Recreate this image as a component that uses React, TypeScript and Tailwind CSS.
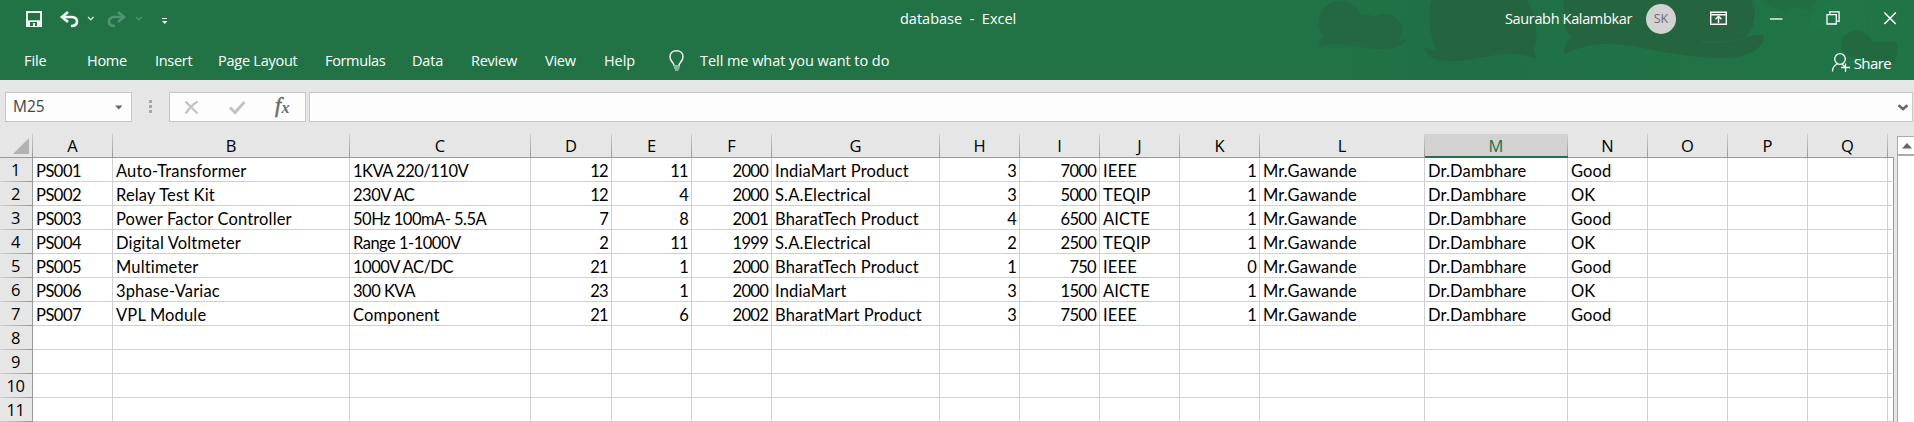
type Column = { id: string; width: string; numeric?: boolean; selected?: boolean };

const columns: Column[] = [
  { id: 'A', width: 'w-[80px]' },
  { id: 'B', width: 'w-[237px]' },
  { id: 'C', width: 'w-[181px]' },
  { id: 'D', width: 'w-[81px]', numeric: true },
  { id: 'E', width: 'w-[80px]', numeric: true },
  { id: 'F', width: 'w-[80px]', numeric: true },
  { id: 'G', width: 'w-[168px]' },
  { id: 'H', width: 'w-[80px]', numeric: true },
  { id: 'I', width: 'w-[80px]', numeric: true },
  { id: 'J', width: 'w-[80px]' },
  { id: 'K', width: 'w-[80px]', numeric: true },
  { id: 'L', width: 'w-[165px]' },
  { id: 'M', width: 'w-[143px]', selected: true },
  { id: 'N', width: 'w-[80px]' },
  { id: 'O', width: 'w-[80px]' },
  { id: 'P', width: 'w-[80px]' },
  { id: 'Q', width: 'w-[80px]' },
];

const rows: string[][] = [
  ['PS001', 'Auto-Transformer', '1KVA 220/110V', '12', '11', '2000', 'IndiaMart Product', '3', '7000', 'IEEE', '1', 'Mr.Gawande', 'Dr.Dambhare', 'Good'],
  ['PS002', 'Relay Test Kit', '230V AC', '12', '4', '2000', 'S.A.Electrical', '3', '5000', 'TEQIP', '1', 'Mr.Gawande', 'Dr.Dambhare', 'OK'],
  ['PS003', 'Power Factor Controller', '50Hz 100mA- 5.5A', '7', '8', '2001', 'BharatTech Product', '4', '6500', 'AICTE', '1', 'Mr.Gawande', 'Dr.Dambhare', 'Good'],
  ['PS004', 'Digital Voltmeter', 'Range 1-1000V', '2', '11', '1999', 'S.A.Electrical', '2', '2500', 'TEQIP', '1', 'Mr.Gawande', 'Dr.Dambhare', 'OK'],
  ['PS005', 'Multimeter', '1000V AC/DC', '21', '1', '2000', 'BharatTech Product', '1', '750', 'IEEE', '0', 'Mr.Gawande', 'Dr.Dambhare', 'Good'],
  ['PS006', '3phase-Variac', '300 KVA', '23', '1', '2000', 'IndiaMart', '3', '1500', 'AICTE', '1', 'Mr.Gawande', 'Dr.Dambhare', 'OK'],
  ['PS007', 'VPL Module', 'Component', '21', '6', '2002', 'BharatMart Product', '3', '7500', 'IEEE', '1', 'Mr.Gawande', 'Dr.Dambhare', 'Good'],
  [], [], [], [],
];

const tabs = [
  { label: 'File', style: 'w-[63px] tracking-[-0.1px]' },
  { label: 'Home', style: 'w-[68px] tracking-[-0.3px]' },
  { label: 'Insert', style: 'w-[63px] tracking-[-0.3px]' },
  { label: 'Page Layout', style: 'w-[107px] tracking-[-0.25px]' },
  { label: 'Formulas', style: 'w-[87px] tracking-[-0.35px]' },
  { label: 'Data', style: 'w-[59px] tracking-[-0.15px]' },
  { label: 'Review', style: 'w-[74px] tracking-[-0.25px]' },
  { label: 'View', style: 'w-[59px] tracking-[-0.25px]' },
  { label: 'Help', style: 'w-[64px] tracking-[-0.1px]' },
];

// Codes with several digits are set tighter than plain words.
function cellTracking(value: string | undefined, numeric?: boolean) {
  if (numeric) return 'text-right tracking-[-0.7px]';
  if (value && /\d{2}/.test(value)) return 'text-left tracking-[-0.5px]';
  return 'text-left tracking-[0.15px]';
}

function Backdrop() {
  return (
    <svg className="absolute right-0 top-0" width="640" height="80" viewBox="1274 0 640 80">
      <defs>
        <linearGradient id="shade" x1="0" x2="1">
          <stop offset="0" stopColor="#217346" stopOpacity="0" />
          <stop offset="0.25" stopColor="#1f7145" />
          <stop offset="1" stopColor="#217446" />
        </linearGradient>
      </defs>
      <rect x="1274" width="640" height="80" fill="url(#shade)" />
      <path d="M1808 32c0-18 12-32 29-32h22c7 8 9 18 7 31c-6-2-15-2-20 3c-14-4-24-5-38-2Z" fill="#227848" opacity=".65" />
      <path d="M1762 0h54l-8 11c-9-5-17-4-25 0c-8-3-14-4-21-11Z" fill="#236b42" opacity=".6" />
      <g fill="#24653f">
        <path d="M1319 47c0-5 2-8 6-10c-4-3-6-8-6-14c0-13 9-22 21-22c10 0 18 6 21 15c3-2 9-2 13 1c8-5 17-3 23 2c7 6 7 14 2 22l7-2c0 6-12 10-25 10c-27-1-42-9-62-2Z" opacity=".8" />
        <path d="M1432 0C1427 14 1429 33 1436 50C1432 50 1427 48 1424 48C1426 57 1436 61 1448 61C1473 62 1490 53 1514 54C1524 55 1530 56 1537 59L1534 50C1539 36 1536 15 1527 0Z" />
        <path d="M1563 0C1565 12 1562 28 1571 37C1566 42 1564 48 1564 54C1580 48 1592 43 1614 44C1642 46 1665 55 1712 58C1744 60 1762 50 1764 38C1764 33 1757 35 1746 37C1757 24 1756 10 1752 0Z" />
        <path d="M1841 44c0-8 7-13 15-13c8 0 14 4 16 11h24c3 6 1 18-3 22c-16-3-34-4-46-9c-4-3-6-6-6-11Z" opacity=".75" />
      </g>
      <path d="M1701 41c12 3 30 1 44-3" stroke="#217144" strokeWidth="1.5" fill="none" opacity=".7" />
    </svg>
  );
}

function TitleBar() {
  return (
    <div className="relative flex h-[38px] items-center pl-[26px]">
      <svg width="150" height="38" viewBox="26 0 150 38" fill="none">
        <path d="M27 12h14v14H27z" stroke="#f3f3f3" strokeWidth="2" />
        <path d="M27 20.3h14V26H27z" fill="#f3f3f3" />
        <path d="M30 22h7v4h-2v-3h-2v3h-3z" fill="#217346" />
        <path d="M63 17h8c4.500 0 6 2 6 4.500s-2 4.500-6 4.500" stroke="#f3f3f3" strokeWidth="2.700" />
        <path d="M68 12l-6 5l6 5" stroke="#f3f3f3" strokeWidth="2.700" />
        <path d="M88 17l2.800 2.800L93.600 17" stroke="#dbe8e0" strokeWidth="1.300" />
        <path d="M123 17h-8c-4.500 0-6 2-6 4.500s2 4.500 6 4.500" stroke="#4f9370" strokeWidth="2.700" />
        <path d="M118 12l6 5l-6 5" stroke="#4f9370" strokeWidth="2.700" />
        <path d="M136 17l2.800 2.800l2.800-2.800" stroke="#4f9370" strokeWidth="1.300" />
        <path d="M162 18.500h5" stroke="#f3f3f3" strokeWidth="1" />
        <path d="M162 21h5.500l-2.750 3z" fill="#f3f3f3" />
      </svg>
      <span className="ml-[724px] whitespace-pre tracking-[0px]">database  -  Excel</span>
      <div className="ml-auto flex items-center pr-[16px]">
        <span className="tracking-[-0.35px]">Saurabh Kalambkar</span>
        <span className="ml-[14px] flex size-[30px] items-center justify-center rounded-full bg-[#d2d2d2] text-[12.500px] text-[#6a6a6a]">SK</span>
        <svg className="ml-[34px]" width="188" height="38" viewBox="1710 0 188 38" fill="none" stroke="#fff">
          <path d="M1710.700 12.200h15.600v12h-15.600zM1710.700 14.800h15.600" strokeWidth="1.400" />
          <path d="M1718.500 23v-6.500M1715.500 19.300l3-3l3 3" strokeWidth="1.400" />
          <path d="M1770 19h12.500" strokeWidth="1.300" />
          <path d="M1827 14.700h9.300v9.300H1827zM1829.700 14.500v-2.600h9.400v9.400h-2.600" strokeWidth="1.300" />
          <path d="M1884.300 12.500l11.500 11.500M1895.800 12.500l-11.500 11.500" strokeWidth="1.500" />
        </svg>
      </div>
    </div>
  );
}

function RibbonTabs() {
  return (
    <div className="relative flex h-[42px] items-start pl-[24px] pt-[12px] leading-[22px]">
      {tabs.map((t) => (
        <span key={t.label} className={`${t.style} shrink-0 whitespace-nowrap`}>{t.label}</span>
      ))}
      <svg className="-mt-[1px]" width="18" height="24" viewBox="0 0 18 24" fill="none" stroke="#f3f3f3">
        <path d="M6 16.500c0-3-4-4-4-8.800C2 4 4.700 1.700 8.500 1.700S15 4 15 7.700c0 4.800-4 5.800-4 8.800" strokeWidth="1.500" />
        <path d="M5.500 17h6.500M6 19h5.500M7 21h3.500" strokeWidth="1.200" />
      </svg>
      <span className="ml-[14px] whitespace-nowrap tracking-[-0.05px]">Tell me what you want to do</span>
      <div className="ml-auto mt-[2px] flex items-start pr-[23px]">
        <svg className="mr-[3px]" width="20" height="22" viewBox="0 0 20 22" fill="none" stroke="#fff">
          <circle cx="9" cy="7" r="5.300" strokeWidth="1.300" />
          <path d="M1.500 19.500c0-4 2-6.500 5-7.500M11 12l3 3" strokeWidth="1.300" />
          <path d="M14.500 11.500v8.500M10 15.500h9" strokeWidth="1.300" />
        </svg>
        <span className="text-[15px] tracking-[-0.6px]">Share</span>
      </div>
    </div>
  );
}

function FormulaBar() {
  return (
    <div className="flex h-[54px] items-start pl-[5px] pt-[12px]">
      <div className="flex h-[30px] w-[127px] items-center justify-between border border-[#c6c6c6] bg-[#fdfdfd] pl-[7px] pr-[8px] text-[15.500px] text-[#444]">
        <span>M25</span>
        <svg width="8" height="5" viewBox="0 0 8 5"><path d="M0 .5h7.500L3.750 4.500z" fill="#666" /></svg>
      </div>
      <div className="ml-[17px] mt-[8px] flex w-[3px] flex-col gap-[2px]">
        <i className="h-[3px] bg-[#a8a8a8]" />
        <i className="h-[3px] bg-[#a8a8a8]" />
        <i className="h-[3px] bg-[#a8a8a8]" />
      </div>
      <div className="ml-[17px] flex h-[30px] w-[137px] border border-[#c6c6c6] bg-[#fdfdfd]">
        <svg width="135" height="28" viewBox="170 93 135 28" fill="none">
          <path d="M185.500 101.500l12 12M197.500 101.500c-5 3-9 8-12 12" stroke="#c3c3c3" strokeWidth="2.200" />
          <path d="M230 107.500l5 5l9.500-10.500" stroke="#c3c3c3" strokeWidth="3" />
          <text x="275" y="112" fill="#6a6a6a" stroke="#6a6a6a" strokeWidth=".5" className="font-['Liberation_Serif',serif] text-[22px] italic">f</text>
          <text x="281.500" y="113" fill="#6a6a6a" className="font-['Liberation_Serif',serif] text-[16px] font-bold italic">x</text>
        </svg>
      </div>
      <div className="ml-[3px] flex h-[30px] w-[1604px] items-center justify-end border border-[#c6c6c6] bg-[#fdfdfd] pr-[4px]">
        <svg width="10" height="7" viewBox="0 0 10 7"><path d="M.5 1.200L5 5l4.500-3.800" fill="none" stroke="#666" strokeWidth="2.600" /></svg>
      </div>
    </div>
  );
}

function HeaderRow() {
  return (
    <div className="flex h-[24px] text-[16.500px]">
      <div className="flex w-[33px] border-b border-[#999]">
        <svg width="32" height="23" viewBox="0 0 32 23"><path d="M29 4v16H13z" fill="#b2b2b2" /></svg>
        <i className="w-px bg-linear-to-b from-[#d0d0d0] to-[#999]" />
      </div>
      {columns.map((c) => (
        <div
          key={c.id}
          className={`flex shrink-0 ${c.width} ${c.selected ? 'border-b-2 border-[#217346] bg-[#d2d2d2] text-[#217346]' : 'border-b border-[#999] text-black'}`}
        >
          <span className="flex-1 text-center leading-[24px]">{c.id}</span>
          <i className="w-px bg-linear-to-b from-[#d0d0d0] to-[#999]" />
        </div>
      ))}
      <div className="w-[6px] border-b border-[#999]" />
    </div>
  );
}

function Sheet() {
  return (
    <div className="flex h-[288px]">
      <div className="w-[1894px] shrink-0">
        <HeaderRow />
        {rows.map((row, r) => (
          <div key={r} className="flex h-[24px] bg-white">
            <div className="flex w-[33px] flex-col border-r border-[#999] bg-[#e6e6e6]">
              <span className="h-[23px] pr-[1px] text-center text-[16.500px] leading-[24px] tracking-[-0.5px]">{r + 1}</span>
              <i className="h-px bg-linear-to-r from-[#d0d0d0] to-[#999]" />
            </div>
            {columns.map((c, i) => (
              <div
                key={c.id}
                className={`shrink-0 whitespace-nowrap border-b border-r border-[#d0d0d0] pl-[3px] pr-[3px] font-['Lato',sans-serif] text-[16.500px] leading-[26px] ${c.width} ${cellTracking(row[i], c.numeric)}`}
              >
                {row[i]}
              </div>
            ))}
            <div className="w-[6px] border-b border-r border-b-[#d0d0d0] border-r-[#999]" />
          </div>
        ))}
      </div>
      <div className="ml-[3px] mt-[2px] flex flex-1 flex-col border-l border-[#ababab] bg-white">
        <div className="flex h-[20px] items-center border-b-2 border-t border-[#ababab] pl-[4px]">
          <svg width="10" height="6" viewBox="0 0 10 6"><path d="M0 5.500L5 0l5 5.500z" fill="#666" /></svg>
        </div>
      </div>
    </div>
  );
}

export default function App() {
  return (
    <div className="h-[422px] w-[1914px] overflow-hidden bg-[#e6e6e6] font-['Open_Sans','Noto_Sans',sans-serif] text-black">
      <header className="relative h-[80px] bg-[#217346] text-[14.500px] text-white">
        <Backdrop />
        <TitleBar />
        <RibbonTabs />
      </header>
      <FormulaBar />
      <Sheet />
    </div>
  );
}
